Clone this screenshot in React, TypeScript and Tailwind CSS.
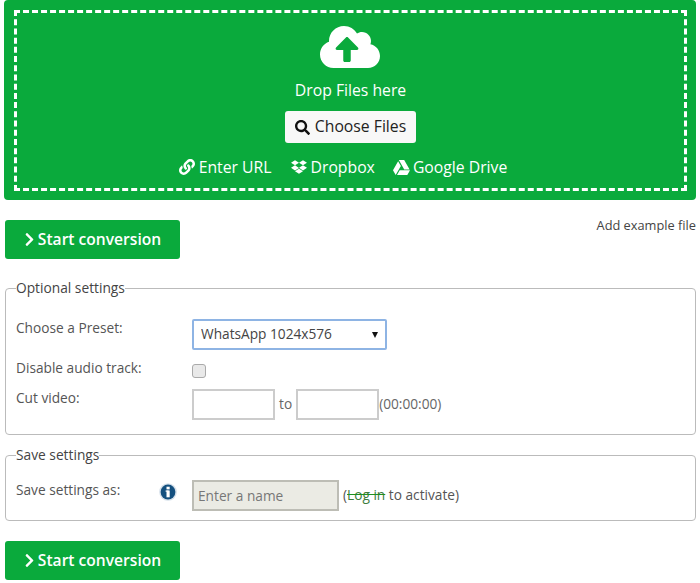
import React from "react";
import { FaCloudUploadAlt, FaSearch, FaLink, FaDropbox, FaGoogleDrive, FaChevronRight } from "react-icons/fa";

function StartButton() {
  return (
    <button className="flex items-center justify-center w-[175px] h-[39px] rounded-[3px] bg-[#0aaa3c] text-white font-semibold text-[15.6px]">
      <FaChevronRight className="w-[13px] h-[15px] mr-[2px] -ml-[1px]" />
      Start conversion
    </button>
  );
}

export default function App() {
  return (
    <div className="w-[700px] h-[583px] overflow-hidden bg-white text-[#555] text-[13.7px] font-['Open_Sans',sans-serif] pl-[4px] pr-[4px]">
      <div className="w-[692px] h-[200px] rounded-[4px] bg-[#0aaa3c] pt-[10px] pl-[10px] text-white">
        <div className="w-[673px] h-[181px] border-[3px] border-dashed border-white flex flex-col items-center pt-[7px]">
          <FaCloudUploadAlt className="w-[60px] h-[54px] text-white -translate-x-[1px]" />
          <div className="text-[15.75px] leading-[22px] mt-[5px]">Drop Files here</div>
          <button className="mt-[10px] flex items-center h-[32px] px-[10px] rounded-[3px] bg-[#f8f8f8] text-[#222] text-[15.75px]">
            <FaSearch className="w-[15px] h-[15px] mr-[5px] text-[#111]" />
            Choose Files
          </button>
          <div className="flex items-center mt-[13px] pr-[15px] text-[15.75px] leading-[22px]">
            <span className="flex items-center"><FaLink className="w-[16px] h-[16px] mr-[4px]" />Enter URL</span>
            <span className="flex items-center ml-[19px]"><FaDropbox className="w-[16px] h-[16px] mr-[4px]" />Dropbox</span>
            <span className="flex items-center ml-[18px]"><FaGoogleDrive className="w-[17px] h-[17px] mr-[3px]" />Google Drive</span>
          </div>
        </div>
      </div>

      <div className="flex justify-between items-start mt-[20px] pl-[1px]">
        <StartButton />
        <a className="text-[12.8px] leading-[16px] text-[#444] mt-[-3px]">Add example file</a>
      </div>

      <fieldset className="mt-[20px] ml-[1px] w-[691px] h-[156px] border border-[#bbb] rounded-[4px] px-[10px] pt-[22px]">
        <legend className="text-[13.75px] leading-[18px] text-[#444]">Optional settings</legend>
        <div className="grid grid-cols-[176px_1fr] items-start">
          <label className="leading-[19px] -mt-[1px]">Choose a Preset:</label>
          <div className="relative w-[195px]">
            <select defaultValue="w" className="appearance-none w-full h-[31px] border-2 border-[#8eb4e4] rounded-[2px] bg-white pl-[7px] text-[13.7px] text-[#444] outline-none">
              <option value="w">WhatsApp 1024x576</option>
            </select>
            <span className="absolute right-[9px] top-[13px] w-0 h-0 border-l-[3.5px] border-r-[3.5px] border-t-[6px] border-l-transparent border-r-transparent border-t-[#111]" />
          </div>
          <label className="leading-[19px] mt-[8px]">Disable audio track:</label>
          <input type="checkbox" className="appearance-none mt-[14px] w-[14px] h-[14px] rounded-[3px] border border-[#aaa] bg-[#e9e9e9]" />
          <label className="leading-[19px] mt-[10px]">Cut video:</label>
          <div className="flex items-center mt-[11px]">
            <input className="w-[83px] h-[31px] border-2 border-[#ccc] bg-white" />
            <span className="ml-[4px] mr-[4px] text-[#666]">to</span>
            <input className="w-[83px] h-[31px] border-2 border-[#ccc] bg-white" />
            <span className="text-[#666]">(00:00:00)</span>
          </div>
        </div>
      </fieldset>

      <fieldset className="mt-[11px] ml-[1px] w-[691px] h-[75px] border border-[#bbb] rounded-[4px] px-[10px] pt-[16px]">
        <legend className="text-[13.75px] leading-[18px] text-[#444]">Save settings</legend>
        <div className="flex items-start">
          <label className="leading-[19px] w-[143px]">Save settings as:</label>
          <svg width="18" height="18" viewBox="0 0 18 18" className="mt-[3px]">
            <circle cx="9" cy="9" r="8.8" fill="#d5e0ea" />
            <circle cx="9" cy="9" r="7.4" fill="#14507f" />
            <rect x="7.5" y="7.5" width="3.2" height="6.8" fill="#fff" />
            <rect x="6.6" y="7.5" width="3" height="1.2" fill="#fff" />
            <rect x="7.5" y="3.7" width="3.2" height="2.7" fill="#fff" />
          </svg>
          <input disabled placeholder="Enter a name" className="ml-[15px] w-[147px] h-[31px] border-2 border-[#bdbdb5] bg-[#ebebe4] pl-[4px] text-[13.7px] placeholder:text-[#777]" />
          <span className="ml-[4px] mt-[5px] leading-[20px] text-[#555]">
            (<span className="text-[#3d7d3d] line-through decoration-[#1f8f1f]">Log in</span> to activate)
          </span>
        </div>
      </fieldset>

      <div className="mt-[20px] pl-[1px]"><StartButton /></div>
    </div>
  );
}
